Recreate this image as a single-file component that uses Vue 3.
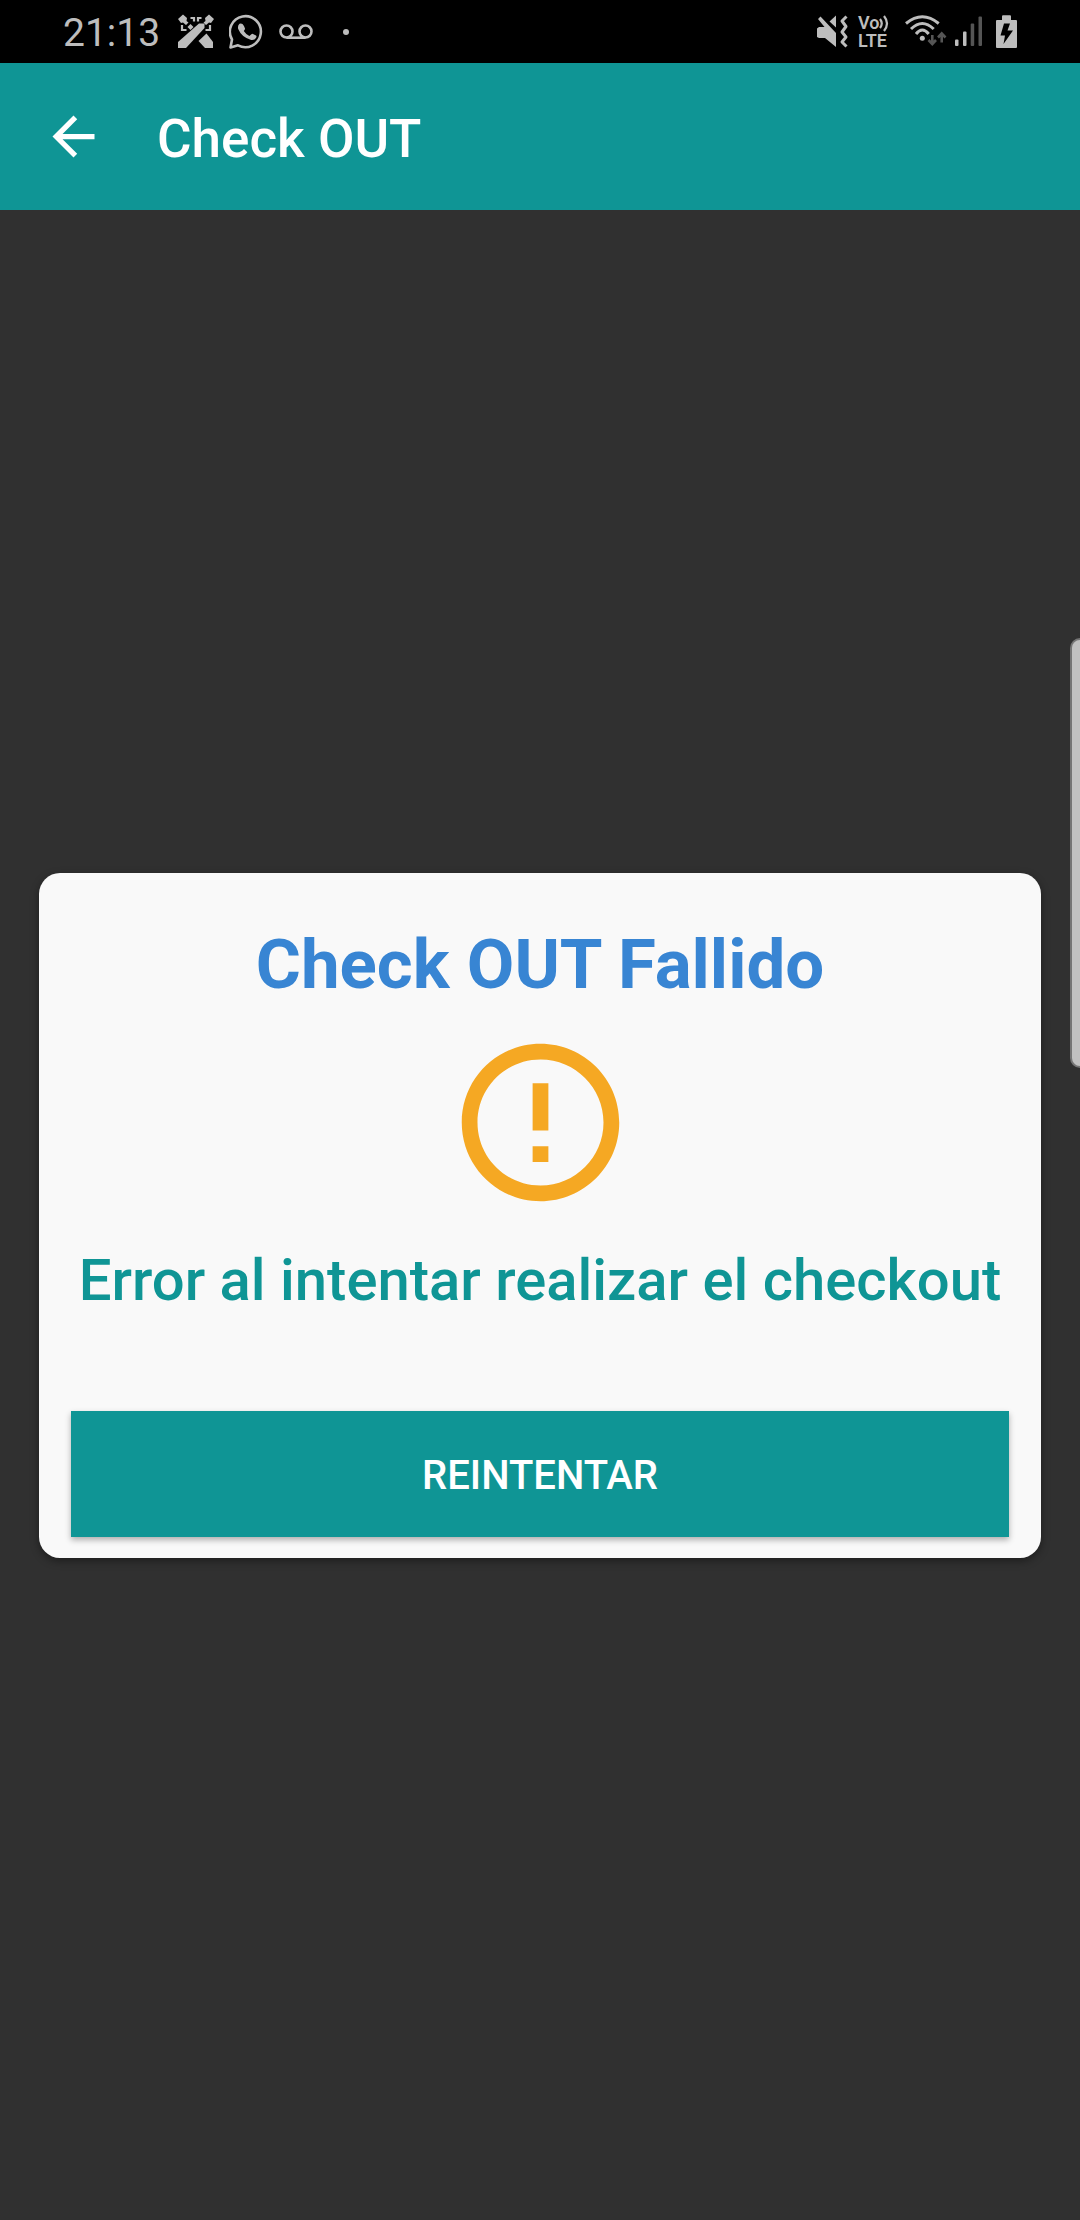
<script setup>
import { ref } from 'vue'

const time = ref('21:13')
</script>

<template>
  <div class="screen">
    <header class="status">
      <span class="clock">{{ time }}</span>
      <svg class="swords" width="36" height="37" viewBox="0 0 36 37" aria-hidden="true">
        <g fill="#bdbdbd">
          <path d="M0 35V29L21 10.500H26.500V15L8 35Z" />
          <path d="M35 35V29L28.500 20.500L20.500 28L27 35Z" />
          <path d="M0 6L5 1.500L9 5L8.500 8L10.500 9.500L8 12L5 9.500L3 10Z" />
          <path d="M36 6L31 1.500L27 5L27.500 8L25.500 9.500L28 12L31 9.500L33 10Z" />
          <path d="M12.500 11L15.500 14L12.500 17L9.500 14Z" />
        </g>
        <path d="M4 12V17H8.500M12.500 5H16V8.500M32 12V17H27.500M23.500 5H20V8.500" fill="none" stroke="#bdbdbd" stroke-width="2.2" />
      </svg>
      <svg class="whatsapp" width="36" height="37" viewBox="0 0 36 37" aria-hidden="true">
        <path d="M3 26.500A15.500 15.500 0 1 1 9 32.300L1.500 34.500Z" fill="none" stroke="#bdbdbd" stroke-width="2.6" stroke-linejoin="round" />
        <path d="M10.500 10.800q1.500-.9 3 .3q1.700 1.700 2.500 4.500q.1 1-1.200 2.400q2 3.300 5.600 5l2-1.800q.8-.6 1.600-.3l3 1.500q.9.700.2 2.200q-1.400 2.800-5 2.300q-9.400-2.200-13-10.800q-.8-3.600 1.300-5.300z" fill="#bdbdbd" />
      </svg>
      <svg class="mail" width="34" height="18" viewBox="0 0 34 18" fill="none" stroke="#bdbdbd" stroke-width="2.6" aria-hidden="true">
        <circle cx="7.500" cy="8.500" r="6" /><circle cx="26.500" cy="8.500" r="6" /><path d="M7.500 14.700H26.500" />
      </svg>
      <i class="dot"></i>
      <svg class="mute" width="32" height="37" viewBox="0 0 32 37" aria-hidden="true">
        <path d="M1 15.500L3 14H8.500L2 6L4.500 3.500L20 20V34L9 25H3L1 24Z" fill="#bdbdbd" />
        <path d="M13.500 8.500L20 2.500V14.500Z" fill="#bdbdbd" />
        <path d="M30.500 3.500L26 8L30 13.500L26 19L30 24L26 29L30.500 33.500" fill="none" stroke="#bdbdbd" stroke-width="3" stroke-linejoin="round" />
      </svg>
      <span class="volte">
        <span class="vo">Vo<svg width="10" height="18" viewBox="0 0 10 18" fill="none" stroke="#bdbdbd" stroke-width="2.2" aria-hidden="true"><path d="M1 5Q4.500 9.500 1 14M5 2Q11 9.500 5 17" /></svg></span>
        <span>LTE</span>
      </span>
      <svg class="wifi" width="43" height="37" viewBox="0 0 43 37" fill="none" stroke="#bdbdbd" stroke-width="3" aria-hidden="true">
        <path d="M2 10.500Q18.300-3 34.700 10.500M7 16Q18.300 5 29.700 16M12 21Q18.300 13 24.700 21" />
        <circle cx="18.300" cy="25.300" r="2.500" fill="#bdbdbd" stroke="none" />
        <path d="M28.300 22V31M24.500 27L28.300 31L32 27M37.700 29.500V20.500M34 24.500L37.700 20.500L41.500 24.500" stroke="#555" stroke-width="2.6" />
      </svg>
      <svg class="signal" width="28" height="37" viewBox="0 0 28 37" aria-hidden="true">
        <g fill="#bdbdbd"><rect y="26.500" width="3.500" height="6.500" rx="1" /><rect x="8" y="18.500" width="3.500" height="14.500" rx="1" /></g>
        <g fill="#555"><rect x="15.700" y="10.500" width="3.500" height="22.500" rx="1" /><rect x="23.500" y="3.500" width="3.500" height="29.500" rx="1" /></g>
      </svg>
      <svg class="battery" width="21" height="37" viewBox="0 0 21 37" aria-hidden="true">
        <path d="M6 7V3.500Q6 2.300 7 2.300H14Q15 2.300 15 3.500V7H20Q21 7 21 8V34Q21 35 20 35H1Q0 35 0 34V8Q0 7 1 7Z" fill="#bdbdbd" />
        <path d="M8 10.500H14L11.500 17.500H17L7.500 31L9 22.500H4.500Z" fill="#000" />
      </svg>
    </header>
    <nav class="bar">
      <button class="back" type="button" aria-label="Atrás">
        <svg width="63" height="63" viewBox="0 0 24 24" aria-hidden="true"><path fill="#fff" d="M20 11H7.830l5.590-5.590L12 4l-8 8 8 8 1.410-1.410L7.830 13H20v-2z" /></svg>
      </button>
      <h1>Check OUT</h1>
    </nav>
    <main class="body">
      <section class="card">
        <h2>Check OUT Fallido</h2>
        <svg class="warn" width="189" height="189" viewBox="0 0 24 24" aria-hidden="true"><path fill="#f5a823" d="M11 15h2v2h-2zm0-8h2v6h-2zm.99-5C6.470 2 2 6.480 2 12s4.470 10 9.990 10C17.520 22 22 17.520 22 12S17.520 2 11.990 2zM12 20c-4.420 0-8-3.580-8-8s3.580-8 8-8 8 3.580 8 8-3.580 8-8 8z" /></svg>
        <p>Error al intentar realizar el checkout</p>
        <button class="retry" type="button">REINTENTAR</button>
      </section>
    </main>
    <div class="edge"></div>
  </div>
</template>

<style>
body { background: #303030; }
</style>

<style scoped>
.screen { position: relative; display: flex; flex-direction: column; min-height: 100vh; background: #303030; font-family: Roboto, sans-serif; }
.status { display: flex; align-items: center; height: 63px; padding: 0 63px; background: #000; color: #bdbdbd; }
.status svg { flex: none; }
.clock { font-size: 39px; line-height: 48px; padding-top: 3px; }
.swords { margin-left: 18px; }
.whatsapp { margin-left: 15px; }
.mail { margin-left: 14px; }
.dot { width: 6px; height: 6px; margin-left: 30px; border-radius: 50%; background: #bdbdbd; }
.mute { margin-left: auto; }
.volte { display: flex; flex-direction: column; width: 30px; margin-left: 10px; font-size: 18px; line-height: 18px; font-weight: 600; }
.vo { display: flex; }
.wifi { margin-left: 16px; }
.signal { margin-left: 8px; }
.battery { margin-left: 13px; }
.bar { display: flex; align-items: center; height: 147px; padding-left: 42px; background: #0f9595; color: #fff; }
.back { display: flex; padding: 0; border: 0; background: none; cursor: pointer; }
h1 { margin: 0 0 0 52px; padding-top: 5px; font-size: 53px; line-height: 64px; font-weight: 500; }
.body { flex: 1; display: flex; flex-direction: column; justify-content: center; padding: 0 39px; }
.card { display: flex; flex-direction: column; align-items: center; padding: 50px 32px 21px; border-radius: 21px; background: #f9f9f9; box-shadow: 0 3px 8px rgba(0, 0, 0, 0.4); }
h2 { margin: 0; font-size: 69px; line-height: 84px; font-weight: 700; color: #3885d3; }
.warn { margin-top: 21px; }
p { margin: 28px 0 96px; font-size: 58px; line-height: 70px; font-weight: 500; color: #0f9595; text-align: center; }
.retry { align-self: stretch; height: 126px; padding: 5px 0 0; border: 0; background: #0f9595; color: #fff; font: 500 40px/48px Roboto, sans-serif; box-shadow: 0 3px 6px rgba(0, 0, 0, 0.3); cursor: pointer; }
.edge { position: absolute; top: 638px; right: 0; width: 8px; height: 426px; border: 2px solid #757575; border-right: 0; border-radius: 16px 0 0 16px; background: #c1c1c1; }
</style>
